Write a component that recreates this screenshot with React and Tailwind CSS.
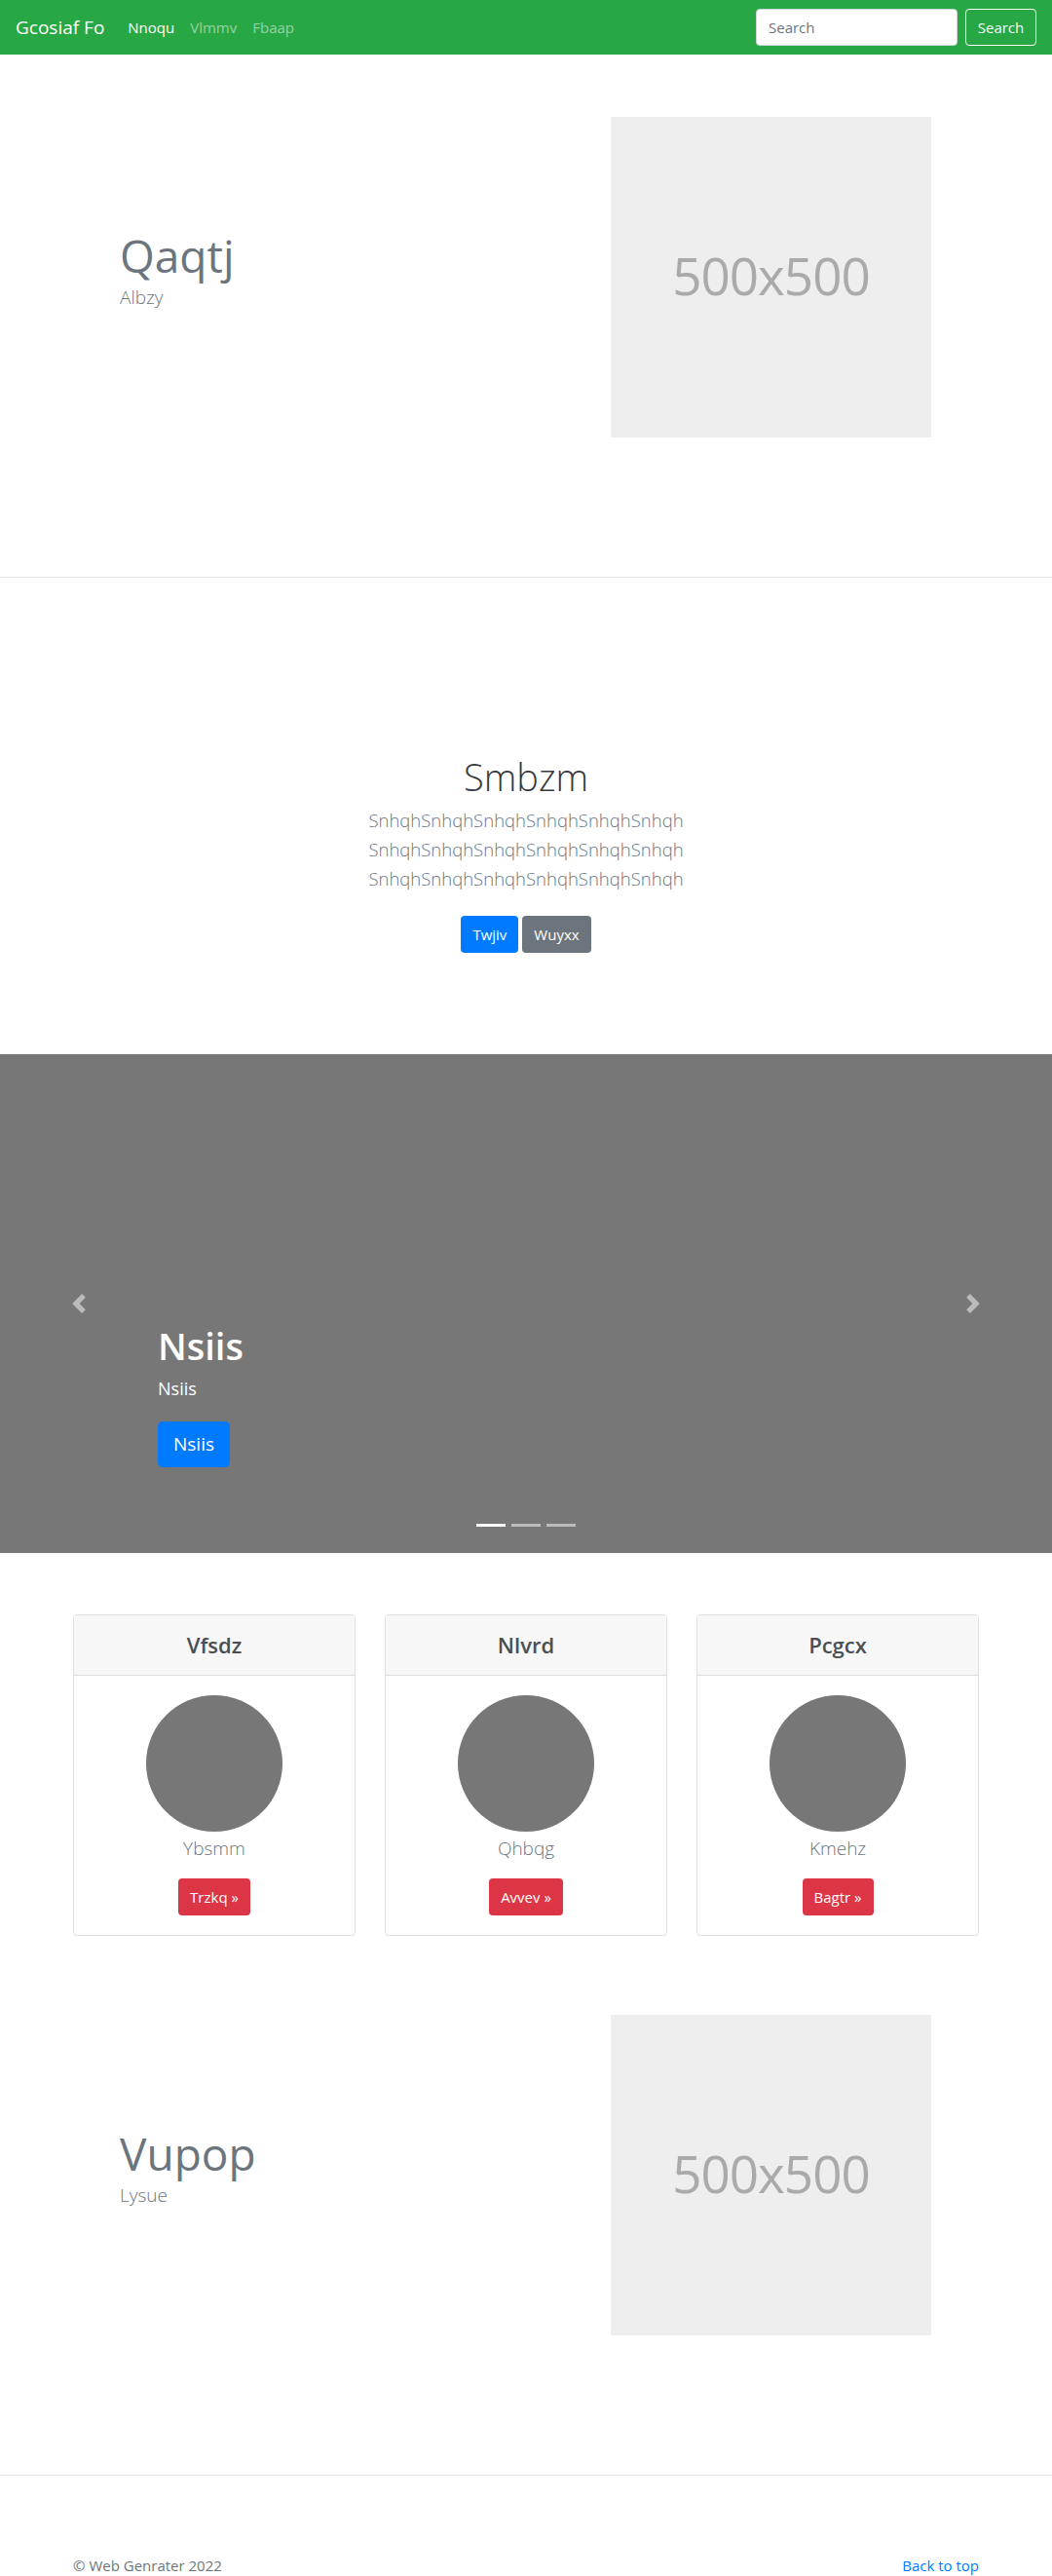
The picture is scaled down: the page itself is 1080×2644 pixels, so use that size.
import React from "react";

const font = { fontFamily: '"Open Sans", "Noto Sans", Arial, sans-serif' };

function Placeholder() {
    return (
        <div className="w-[329px] h-[329px] bg-[#eeeeee] flex items-center justify-center">
            <span className="text-[53px] text-[#aaaaaa] font-normal tracking-[-1px] mb-[4px]">500x500</span>
        </div>
    );
}

function Hero({ title, subtitle }) {
    return (
        <section className="pt-[64px] pb-[143px] border-b border-[#e5e5e5]">
            <div className="w-[960px] mx-auto flex items-center">
                <div className="w-[480px] pl-[63px] pb-[16px]">
                    <h1 className="text-[46px] leading-[56px] text-[#6c757d] font-normal">{title}</h1>
                    <p className="text-[19px] leading-[30px] text-[#6c757d] font-light">{subtitle}</p>
                </div>
                <div className="pl-[87px]">
                    <Placeholder />
                </div>
            </div>
        </section>
    );
}

function Card({ title, name, cta }) {
    return (
        <div className="border border-[#dfdfdf] rounded-[4px] overflow-hidden text-center">
            <div className="bg-[#f7f7f7] border-b border-[#dfdfdf] h-[62px] flex items-center justify-center">
                <h4 className="text-[22px] font-semibold text-[#4a4f54]">{title}</h4>
            </div>
            <div className="p-[20px] flex flex-col items-center">
                <div className="w-[140px] h-[140px] rounded-full bg-[#777777]"></div>
                <p className="text-[19px] leading-[30px] font-light text-[#6c757d] mt-[2px]">{name}</p>
                <button className="mt-[16px] bg-[#dc3545] text-white text-[15px] h-[38px] px-[12px] rounded-[4px]">
                    {cta} &raquo;
                </button>
            </div>
        </div>
    );
}

export default function App() {
    return (
        <div style={font} className="bg-white text-[#212529]">
            {/* navbar */}
            <nav className="h-[56px] bg-[#28a745] flex items-center px-[16px]">
                <a className="text-white text-[19px] mr-[16px]">Gcosiaf Fo</a>
                <div className="flex items-center text-[15px]">
                    <a className="px-[8px] text-white">Nnoqu</a>
                    <a className="px-[8px] text-white/50">Vlmmv</a>
                    <a className="px-[8px] text-white/50">Fbaap</a>
                </div>
                <div className="ml-auto flex items-center">
                    <input
                        placeholder="Search"
                        className="w-[207px] h-[38px] bg-white rounded-[4px] border border-[#ced4da] px-[12px] text-[15px] outline-none placeholder:text-[#6c757d]"
                    />
                    <button className="ml-[8px] h-[38px] w-[73px] border border-[#f8f9fa] rounded-[4px] text-[#f8f9fa] text-[15px]">
                        Search
                    </button>
                </div>
            </nav>

            <Hero title="Qaqtj" subtitle="Albzy" />

            {/* centered intro */}
            <section className="pt-[180px] pb-[104px] text-center">
                <h1 className="text-[38px] leading-[48px] font-light text-[#343a40] mb-[6px]">Smbzm</h1>
                <p className="text-[18.5px] leading-[30px] font-light text-[#6c757d]">
                    SnhqhSnhqhSnhqhSnhqhSnhqhSnhqh
                    <br />
                    SnhqhSnhqhSnhqhSnhqhSnhqhSnhqh
                    <br />
                    SnhqhSnhqhSnhqhSnhqhSnhqhSnhqh
                </p>
                <div className="mt-[23px] flex justify-center gap-[4px]">
                    <button className="h-[38px] px-[12px] bg-[#007bff] text-white text-[15px] rounded-[4px]">Twjiv</button>
                    <button className="h-[38px] px-[12px] bg-[#6c757d] text-white text-[15px] rounded-[4px]">Wuyxx</button>
                </div>
            </section>

            {/* carousel */}
            <section className="relative h-[512px] bg-[#777777] overflow-hidden">
                <div className="absolute left-0 top-0 bottom-0 w-[15%] flex items-center justify-center">
                    <svg width="20" height="20" viewBox="0 0 8 8" fill="rgba(255,255,255,0.5)">
                        <path d="M5.25 0l-4 4 4 4 1.5-1.5L4.25 4l2.5-2.5L5.25 0z" />
                    </svg>
                </div>
                <div className="absolute right-0 top-0 bottom-0 w-[15%] flex items-center justify-center">
                    <svg width="20" height="20" viewBox="0 0 8 8" fill="rgba(255,255,255,0.5)">
                        <path d="M2.75 0l-1.5 1.5L3.75 4l-2.5 2.5L2.75 8l4-4-4-4z" />
                    </svg>
                </div>
                <div className="absolute left-[15%] right-[15%] bottom-[88px] text-white">
                    <h1 className="text-[38px] leading-[48px] font-semibold mb-[5px]">Nsiis</h1>
                    <p className="text-[18px] leading-[30px] mb-[19px]">Nsiis</p>
                    <button className="h-[47px] px-[16px] bg-[#007bff] text-white text-[19px] rounded-[5px]">Nsiis</button>
                </div>
                <div className="absolute bottom-[27px] left-0 right-0 flex justify-center gap-[6px]">
                    <span className="w-[30px] h-[3px] bg-white"></span>
                    <span className="w-[30px] h-[3px] bg-white/50"></span>
                    <span className="w-[30px] h-[3px] bg-white/50"></span>
                </div>
            </section>

            {/* cards */}
            <section className="pt-[63px] pb-[17px]">
                <div className="w-[930px] mx-auto grid grid-cols-3 gap-[30px]">
                    <Card title="Vfsdz" name="Ybsmm" cta="Trzkq" />
                    <Card title="Nlvrd" name="Qhbqg" cta="Avvev" />
                    <Card title="Pcgcx" name="Kmehz" cta="Bagtr" />
                </div>
            </section>

            <Hero title="Vupop" subtitle="Lysue" />

            {/* footer */}
            <footer className="pt-[80px] pb-[0px]">
                <div className="w-[930px] mx-auto flex justify-between text-[15px] leading-[24px]">
                    <p className="text-[#6c757d]">&copy; Web Genrater 2022</p>
                    <a className="text-[#007bff]">Back to top</a>
                </div>
            </footer>
        </div>
    );
}
